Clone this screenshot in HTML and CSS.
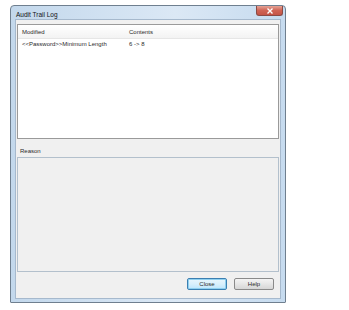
FILE: index.html
```html
<!DOCTYPE html>
<html lang="en">
<head>
    <meta charset="UTF-8">
    <meta name="viewport" content="width=device-width, initial-scale=1.0">
    <title>Audit Trail Log</title>
    <link rel="stylesheet" href="styles.css">
</head>
<body>
<div class="window">
    <div class="titlebar">
        <span class="title">Audit Trail Log</span>
        <div class="close-btn">
            <svg width="8" height="6" viewBox="0 0 8 6">
                <path d="M1.5 0.5 L6.5 5.5 M6.5 0.5 L1.5 5.5" stroke="#fff" stroke-width="1.4"/>
            </svg>
        </div>
    </div>
    <div class="client">
        <div class="list">
            <div class="list-head">
                <span class="col-mod">Modified</span>
                <span class="col-cont">Contents</span>
            </div>
            <div class="list-row">
                <span class="col-mod">&lt;&lt;Password&gt;&gt;Minimum Length</span>
                <span class="col-cont">6 -&gt; 8</span>
            </div>
        </div>
        <div class="label">Reason</div>
        <div class="reason-box"></div>
        <div class="buttons">
            <div class="btn btn-default">Close</div>
            <div class="btn">Help</div>
        </div>
    </div>
</div>
</body>
</html>
```

FILE: styles.css
```css
body, html {
    margin: 0;
    padding: 0;
    background-color: #fff;
    font-family: "Liberation Sans", Arial, sans-serif;
    font-size: 6px;
    color: #2a2a2a;
}

.window {
    margin: 5px 0 0 10px;
    width: 276px;
    height: 298px;
    box-sizing: border-box;
    border: 1px solid #6f7f8f;
    border-radius: 4px 4px 1px 1px;
    background: linear-gradient(to right, #c3d8ec, #dbe8f5 60%, #c6dbef);
    padding: 0 4px 3px 4px;
    display: flex;
    flex-direction: column;
}

.titlebar {
    height: 15px;
    display: flex;
    justify-content: space-between;
    align-items: flex-start;
}

.title {
    padding-top: 5px;
    padding-left: 1px;
    font-size: 6.5px;
    color: #111;
}

.close-btn {
    width: 25px;
    height: 9px;
    margin-right: -2px;
    border: 1px solid #8a4a44;
    border-top: none;
    border-radius: 0 0 3px 3px;
    background: linear-gradient(to bottom, #e6a396, #cf6354 50%, #c55446);
    display: flex;
    align-items: center;
    justify-content: center;
}

.client {
    flex: 1;
    background-color: #f0f0f0;
    border: 1px solid #a6b9cd;
    padding: 4px 1px 8px 1px;
    display: flex;
    flex-direction: column;
}

.list {
    height: 115px;
    box-sizing: border-box;
    background-color: #fff;
    border: 1px solid #9a9a9a;
}

.list-head {
    height: 12px;
    display: flex;
    align-items: center;
    padding-top: 1px;
    background: linear-gradient(to bottom, #fff, #f3f3f3);
    border-bottom: 1px solid #e6e6e6;
}

.list-row {
    height: 10px;
    display: flex;
    align-items: center;
}

.col-mod {
    width: 107px;
    padding-left: 4px;
}

.label {
    margin-top: 9px;
    height: 9px;
    padding-left: 3px;
}

.reason-box {
    height: 115px;
    box-sizing: border-box;
    border: 1px solid #b3c0cc;
    background-color: #f0f0f0;
}

.buttons {
    margin-top: 6px;
    padding-right: 5px;
    display: flex;
    justify-content: flex-end;
    gap: 7px;
}

.btn {
    width: 40px;
    height: 12px;
    box-sizing: border-box;
    border: 1px solid #8a8a8a;
    border-radius: 2px;
    background: linear-gradient(to bottom, #f4f4f4, #e6e6e6 50%, #d6d6d6);
    display: flex;
    align-items: center;
    justify-content: center;
}

.btn-default {
    border-color: #3c7fb1;
    background: linear-gradient(to bottom, #eaf6fd, #d9f0fc 50%, #bee6fd);
    box-shadow: inset 0 0 0 1px #8fd0f0;
}
```
